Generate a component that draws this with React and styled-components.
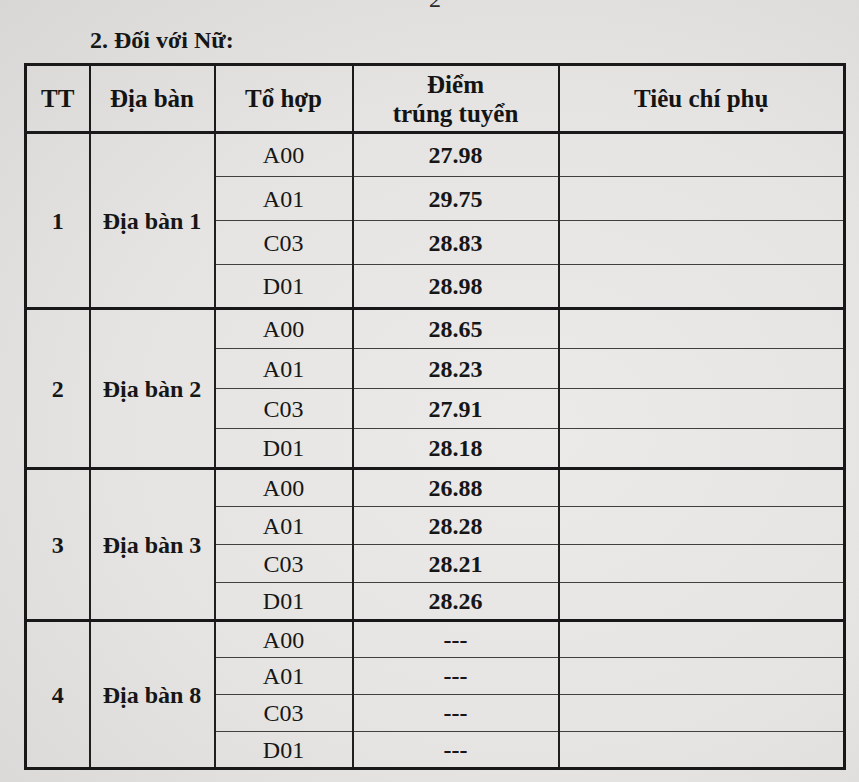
import React from 'react';
import styled, { createGlobalStyle } from 'styled-components';

const Global = createGlobalStyle`
  html, body { margin: 0; padding: 0; }
  body {
    background: #e3e2e0;
    font-family: "Liberation Serif", "Times New Roman", serif;
    color: #161616;
  }
`;

const Page = styled.div`
  width: 859px;
  height: 782px;
  overflow: hidden;
  box-sizing: border-box;
  padding: 0 13px 0 24px;
  background: radial-gradient(ellipse at 62% 55%, #ebeae8 0%, #e5e4e2 55%, #d8d7d5 100%);
`;

const PageNumber = styled.div`
  margin-top: -13px;
  height: 24px;
  line-height: 24px;
  font-size: 24px;
  text-align: center;
  color: #2a2a2a;
`;

const Title = styled.h2`
  margin: 14px 0 0 66px;
  font-size: 24px;
  line-height: 30px;
  font-weight: 700;
  color: #161616;
`;

const Table = styled.table`
  margin-top: 8px;
  width: 822px;
  border-collapse: collapse;
  table-layout: fixed;
  border: 3px solid #181818;
`;

const Row = styled.tr`
  height: ${p => p.$h}px;
`;

const HeadCell = styled.th`
  border: 3px solid #1a1a1a;
  border-left-width: 2px;
  border-right-width: 2px;
  font-size: 25px;
  line-height: 29px;
  font-weight: 700;
  text-align: center;
  vertical-align: middle;
  padding: 0;
  color: #141414;
`;

const Cell = styled.td`
  border-left: 2px solid #1f1f1f;
  border-right: 2px solid #1f1f1f;
  border-top: ${p => (p.$groupStart ? '3px solid #181818' : '1px solid #404040')};
  border-bottom: ${p => (p.$groupEnd ? '3px solid #181818' : '1px solid #404040')};
  font-size: 24px;
  line-height: 26px;
  font-weight: ${p => (p.$bold ? 700 : 400)};
  text-align: center;
  vertical-align: middle;
  padding: 0;
  color: #161616;
`;

const groups = [
  { tt: '1', area: 'Địa bàn 1', h: 44, scores: ['27.98', '29.75', '28.83', '28.98'] },
  { tt: '2', area: 'Địa bàn 2', h: 40, scores: ['28.65', '28.23', '27.91', '28.18'] },
  { tt: '3', area: 'Địa bàn 3', h: 38, scores: ['26.88', '28.28', '28.21', '28.26'] },
  { tt: '4', area: 'Địa bàn 8', h: 37, scores: ['---', '---', '---', '---'] },
];

const combos = ['A00', 'A01', 'C03', 'D01'];

export default function App() {
  return (
    <>
      <Global />
      <Page>
        <PageNumber>2</PageNumber>
        <Title>2. Đối với Nữ:</Title>
        <Table>
          <colgroup>
            <col style={{ width: 64 }} />
            <col style={{ width: 125 }} />
            <col style={{ width: 138 }} />
            <col style={{ width: 206 }} />
            <col />
          </colgroup>
          <thead>
            <Row $h={68}>
              <HeadCell>TT</HeadCell>
              <HeadCell>Địa bàn</HeadCell>
              <HeadCell>Tổ hợp</HeadCell>
              <HeadCell>
                Điểm
                <br />
                trúng tuyển
              </HeadCell>
              <HeadCell>Tiêu chí phụ</HeadCell>
            </Row>
          </thead>
          <tbody>
            {groups.map(g =>
              combos.map((c, i) => (
                <Row key={g.tt + c} $h={g.h}>
                  {i === 0 && (
                    <>
                      <Cell rowSpan={4} $groupStart $groupEnd $bold>
                        {g.tt}
                      </Cell>
                      <Cell rowSpan={4} $groupStart $groupEnd $bold>
                        {g.area}
                      </Cell>
                    </>
                  )}
                  <Cell $groupStart={i === 0} $groupEnd={i === 3}>{c}</Cell>
                  <Cell $groupStart={i === 0} $groupEnd={i === 3} $bold>
                    {g.scores[i]}
                  </Cell>
                  <Cell $groupStart={i === 0} $groupEnd={i === 3} />
                </Row>
              ))
            )}
          </tbody>
        </Table>
      </Page>
    </>
  );
}
